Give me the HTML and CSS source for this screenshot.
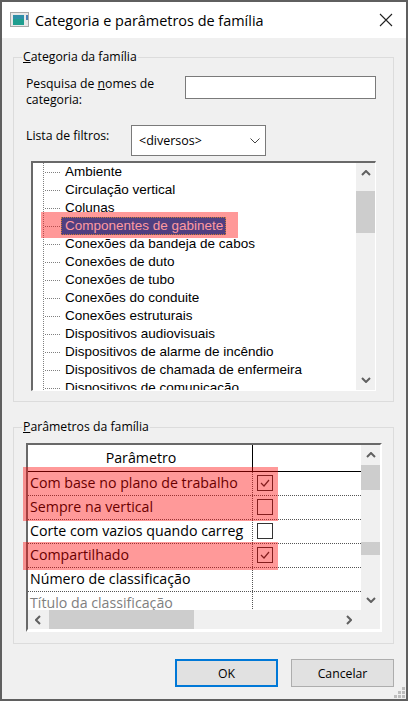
FILE: index.html
```html
<!DOCTYPE html>
<html lang="pt">
<head>
    <meta charset="UTF-8">
    <title>Categoria e parâmetros de família</title>
    <link rel="stylesheet" href="styles.css">
</head>
<body>
    <div class="window">
        <div class="titlebar">
            <svg class="app-icon" width="20" height="16" viewBox="0 0 20 16">
                <rect x="0.5" y="0.5" width="18" height="14" fill="#e8e8e8" stroke="#a8a8a8"/>
                <rect x="3" y="3" width="11" height="10" fill="#1f9e8f"/>
                <rect x="3" y="3" width="11" height="4" fill="#2f8fa8"/>
                <rect x="16" y="3" width="2" height="5" fill="#4a7fb5"/>
            </svg>
            <span class="title">Categoria e parâmetros de família</span>
            <svg class="close" width="14" height="14" viewBox="0 0 14 14">
                <path d="M1 1 L13 13 M13 1 L1 13" stroke="#222" stroke-width="1.1" fill="none"/>
            </svg>
        </div>

        <div class="group group-category">
            <span class="group-title"><u>C</u>ategoria da família</span>
            <div class="search-row">
                <label class="search-label">Pesquisa de <u>n</u>omes de categoria:</label>
                <div class="text-input"></div>
            </div>
            <div class="filter-row">
                <label class="filter-label">Lista de filtros:</label>
                <div class="select">
                    <span>&lt;diversos&gt;</span>
                    <svg width="10" height="6" viewBox="0 0 10 6"><path d="M0.5 0.5 L5 5 L9.5 0.5" stroke="#444" fill="none"/></svg>
                </div>
            </div>
            <div class="tree">
                <div class="tree-list">
                    <div class="tree-row">Ambiente</div>
                    <div class="tree-row">Circulação vertical</div>
                    <div class="tree-row">Colunas</div>
                    <div class="tree-row"><span class="tree-selected">Componentes de gabinete</span></div>
                    <div class="tree-row">Conexões da bandeja de cabos</div>
                    <div class="tree-row">Conexões de duto</div>
                    <div class="tree-row">Conexões de tubo</div>
                    <div class="tree-row">Conexões do conduite</div>
                    <div class="tree-row">Conexões estruturais</div>
                    <div class="tree-row">Dispositivos audiovisuais</div>
                    <div class="tree-row">Dispositivos de alarme de incêndio</div>
                    <div class="tree-row">Dispositivos de chamada de enfermeira</div>
                    <div class="tree-row">Dispositivos de comunicação</div>
                </div>
                <div class="vscroll tree-scroll">
                    <svg class="arrow" width="10" height="6" viewBox="0 0 10 6"><path d="M1 5 L5 1 L9 5" stroke="#606060" stroke-width="2" fill="none"/></svg>
                    <div class="thumb tree-thumb"></div>
                    <svg class="arrow arrow-end" width="10" height="6" viewBox="0 0 10 6"><path d="M1 1 L5 5 L9 1" stroke="#606060" stroke-width="2" fill="none"/></svg>
                </div>
            </div>
        </div>

        <div class="group group-params">
            <span class="group-title"><u>P</u>arâmetros da família</span>
            <div class="grid">
                <div class="grid-body">
                    <div class="grid-head">
                        <div class="cell-name">Parâmetro</div>
                        <div class="cell-check"></div>
                    </div>
                    <div class="grid-row">
                        <div class="cell-name">Com base no plano de trabalho</div>
                        <div class="cell-check"><span class="checkbox"><svg width="14" height="14" viewBox="0 0 14 14"><path d="M3 7 L6 10 L11 4" stroke="#333" stroke-width="1.2" fill="none"/></svg></span></div>
                    </div>
                    <div class="grid-row">
                        <div class="cell-name">Sempre na vertical</div>
                        <div class="cell-check"><span class="checkbox"></span></div>
                    </div>
                    <div class="grid-row">
                        <div class="cell-name">Corte com vazios quando carreg</div>
                        <div class="cell-check"><span class="checkbox"></span></div>
                    </div>
                    <div class="grid-row">
                        <div class="cell-name">Compartilhado</div>
                        <div class="cell-check"><span class="checkbox"><svg width="14" height="14" viewBox="0 0 14 14"><path d="M3 7 L6 10 L11 4" stroke="#333" stroke-width="1.2" fill="none"/></svg></span></div>
                    </div>
                    <div class="grid-row">
                        <div class="cell-name">Número de classificação</div>
                        <div class="cell-check"></div>
                    </div>
                    <div class="grid-row row-muted">
                        <div class="cell-name">Título da classificação</div>
                        <div class="cell-check"></div>
                    </div>
                </div>
                <div class="vscroll grid-vscroll">
                    <svg class="arrow" width="10" height="6" viewBox="0 0 10 6"><path d="M1 5 L5 1 L9 5" stroke="#606060" stroke-width="2" fill="none"/></svg>
                    <div class="thumb grid-thumb"></div>
                    <div class="thumb grid-thumb-low"></div>
                    <svg class="arrow arrow-end" width="10" height="6" viewBox="0 0 10 6"><path d="M1 1 L5 5 L9 1" stroke="#606060" stroke-width="2" fill="none"/></svg>
                </div>
                <div class="hscroll">
                    <svg width="6" height="10" viewBox="0 0 6 10"><path d="M5 1 L1 5 L5 9" stroke="#606060" stroke-width="2" fill="none"/></svg>
                    <div class="hthumb"></div>
                    <svg class="arrow-right" width="6" height="10" viewBox="0 0 6 10"><path d="M1 1 L5 5 L1 9" stroke="#606060" stroke-width="2" fill="none"/></svg>
                </div>
            </div>
        </div>

        <div class="footer">
            <button class="btn btn-default">OK</button>
            <button class="btn">Cancelar</button>
        </div>

        <!-- marcas vermelhas sobre a captura -->
        <div class="mark mark-tree"></div>
        <div class="mark mark-params"></div>
        <div class="mark mark-shared"></div>

        <svg class="grip" width="12" height="12" viewBox="0 0 12 12" fill="#bdbdbd">
            <rect x="8" y="0" width="3" height="3"/>
            <rect x="4" y="4" width="3" height="3"/>
            <rect x="8" y="4" width="3" height="3"/>
            <rect x="0" y="8" width="3" height="3"/>
            <rect x="4" y="8" width="3" height="3"/>
            <rect x="8" y="8" width="3" height="3"/>
        </svg>
    </div>
</body>
</html>
```

FILE: styles.css
```css
* {
    margin: 0;
    padding: 0;
    box-sizing: border-box;
}

body {
    width: 408px;
    height: 701px;
    overflow: hidden;
    font-family: "Open Sans", "Noto Sans", sans-serif;
    font-size: 12.25px;
    color: #000;
}

/* Janela */
.window {
    position: relative;
    width: 408px;
    height: 701px;
    background: #f0f0f0;
    border: 2px solid #5f5f5f;
}

.titlebar {
    display: flex;
    align-items: center;
    height: 36px;
    padding-left: 8px;
    background: #fff;
}

.app-icon {
    margin-right: 5px;
}

.title {
    flex: 1;
    font-size: 14.45px;
}

.close {
    margin-right: 13px;
}

/* Grupos */
.group {
    position: relative;
    margin-left: 11px;
    width: 381px;
    border: 1px solid #dcdcdc;
}

.group-category {
    margin-top: 19px;
    height: 345px;
    padding-left: 12px;
}

.group-params {
    margin-top: 25px;
    height: 217px;
    padding-left: 12px;
}

.group-title {
    position: absolute;
    top: -9px;
    left: 8px;
    padding: 0 1px;
    background: #f0f0f0;
    line-height: 16px;
}

.search-row {
    display: flex;
    padding-top: 18px;
}

.search-label {
    width: 159px;
    padding-right: 20px;
    line-height: 16px;
}

.text-input {
    width: 191px;
    height: 23px;
    background: #fff;
    border: 1px solid #7a7a7a;
}

.filter-row {
    display: flex;
    margin-top: 17px;
}

.filter-label {
    width: 105px;
    padding-top: 3px;
    line-height: 16px;
}

.select {
    display: flex;
    align-items: center;
    justify-content: space-between;
    width: 135px;
    height: 31px;
    padding: 0 5px 0 7px;
    font-size: 12.5px;
    background: #fff;
    border: 1px solid #7a7a7a;
}

/* Arvore de categorias */
.tree {
    display: flex;
    width: 345px;
    height: 230px;
    margin: 5px 0 0 5px;
    background: #fff;
    border-style: solid;
    border-width: 2px 1px 1px 2px;
    border-color: #696969 #fff #fff #696969;
}

.tree-list {
    flex: 1;
    overflow: hidden;
    font-family: "Liberation Sans", sans-serif;
    font-size: 13.5px;
}

.tree-row {
    height: 18px;
    padding-left: 32px;
    line-height: 18px;
    white-space: nowrap;
    background-image:
        repeating-linear-gradient(180deg, #808080 0 1px, transparent 1px 2px),
        repeating-linear-gradient(90deg, #808080 0 1px, transparent 1px 2px);
    background-repeat: no-repeat;
    background-size: 1px 18px, 16px 1px;
    background-position: 10px 0, 12px 9px;
}

.tree-selected {
    position: relative;
    z-index: 2;
    display: inline-block;
    height: 18px;
    margin-left: -4px;
    padding: 0 3px 0 4px;
    color: #ff9aa0;
    background: #503f80;
    outline: 1px dotted #c87a3a;
    outline-offset: -1px;
}

/* Barras de rolagem */
.vscroll {
    display: flex;
    flex-direction: column;
    align-items: center;
    width: 19px;
    background: #f0f0f0;
}

.arrow {
    flex: none;
    margin-top: 7px;
}

.arrow-end {
    margin-top: auto;
    margin-bottom: 7px;
}

.thumb {
    width: 100%;
    background: #cdcdcd;
}

.tree-thumb {
    height: 42px;
    margin-top: 15px;
}

/* Tabela de parametros */
.grid {
    display: grid;
    grid-template-columns: 333px 19px;
    grid-template-rows: 165px 19px;
    width: 356px;
    height: 189px;
    margin-top: 15px;
    border-style: solid;
    border-width: 2px 2px 3px 2px;
    border-color: #696969 #fff #fff #696969;
    background: #f0f0f0;
}

.grid-body {
    overflow: hidden;
    background: #fff;
    font-size: 14.2px;
}

.grid-head {
    display: flex;
    height: 27px;
    line-height: 26px;
    border-bottom: 1px solid #000;
    text-align: center;
}

.grid-head .cell-check {
    border-left: 1px solid #000;
}

.grid-row {
    display: flex;
    height: 24px;
    line-height: 22px;
    white-space: nowrap;
    border-bottom: 1px dotted #555;
}

.cell-name {
    width: 224px;
    padding-left: 2px;
    overflow: hidden;
}

.cell-check {
    flex: 1;
    padding: 3px 0 0 4px;
    border-left: 1px dotted #555;
}

.row-muted {
    color: #808080;
}

.checkbox {
    display: block;
    width: 16px;
    height: 16px;
    background: #fff;
    border: 1px solid #333;
}

.checkbox svg {
    display: block;
}

.grid-thumb {
    height: 25px;
    margin-top: 7px;
}

.grid-thumb-low {
    height: 13px;
    margin-top: 52px;
}

.hscroll {
    grid-column: 1 / 3;
    display: flex;
    align-items: center;
    padding: 0 7px;
    background: #f0f0f0;
}

.hthumb {
    width: 145px;
    height: 100%;
    margin-left: 8px;
    background: #cdcdcd;
}

.arrow-right {
    margin-left: auto;
    margin-right: 21px;
}

/* Botoes */
.footer {
    display: flex;
    justify-content: flex-end;
    gap: 13px;
    margin: 15px 12px 0 0;
}

.btn {
    width: 103px;
    height: 28px;
    font-family: inherit;
    font-size: 12.25px;
    background: #e1e1e1;
    border: 1px solid #adadad;
}

.btn-default {
    border: 2px solid #0078d7;
}

/* Marcas vermelhas */
.mark {
    position: absolute;
    z-index: 1;
    background: rgba(255, 0, 0, 0.4);
}

.mark-tree {
    left: 39px;
    top: 210px;
    width: 197px;
    height: 26px;
}

.mark-params {
    left: 21px;
    top: 465px;
    width: 255px;
    height: 54px;
}

.mark-shared {
    left: 21px;
    top: 540px;
    width: 255px;
    height: 28px;
}

.grip {
    position: absolute;
    right: 0;
    bottom: 0;
}
```
